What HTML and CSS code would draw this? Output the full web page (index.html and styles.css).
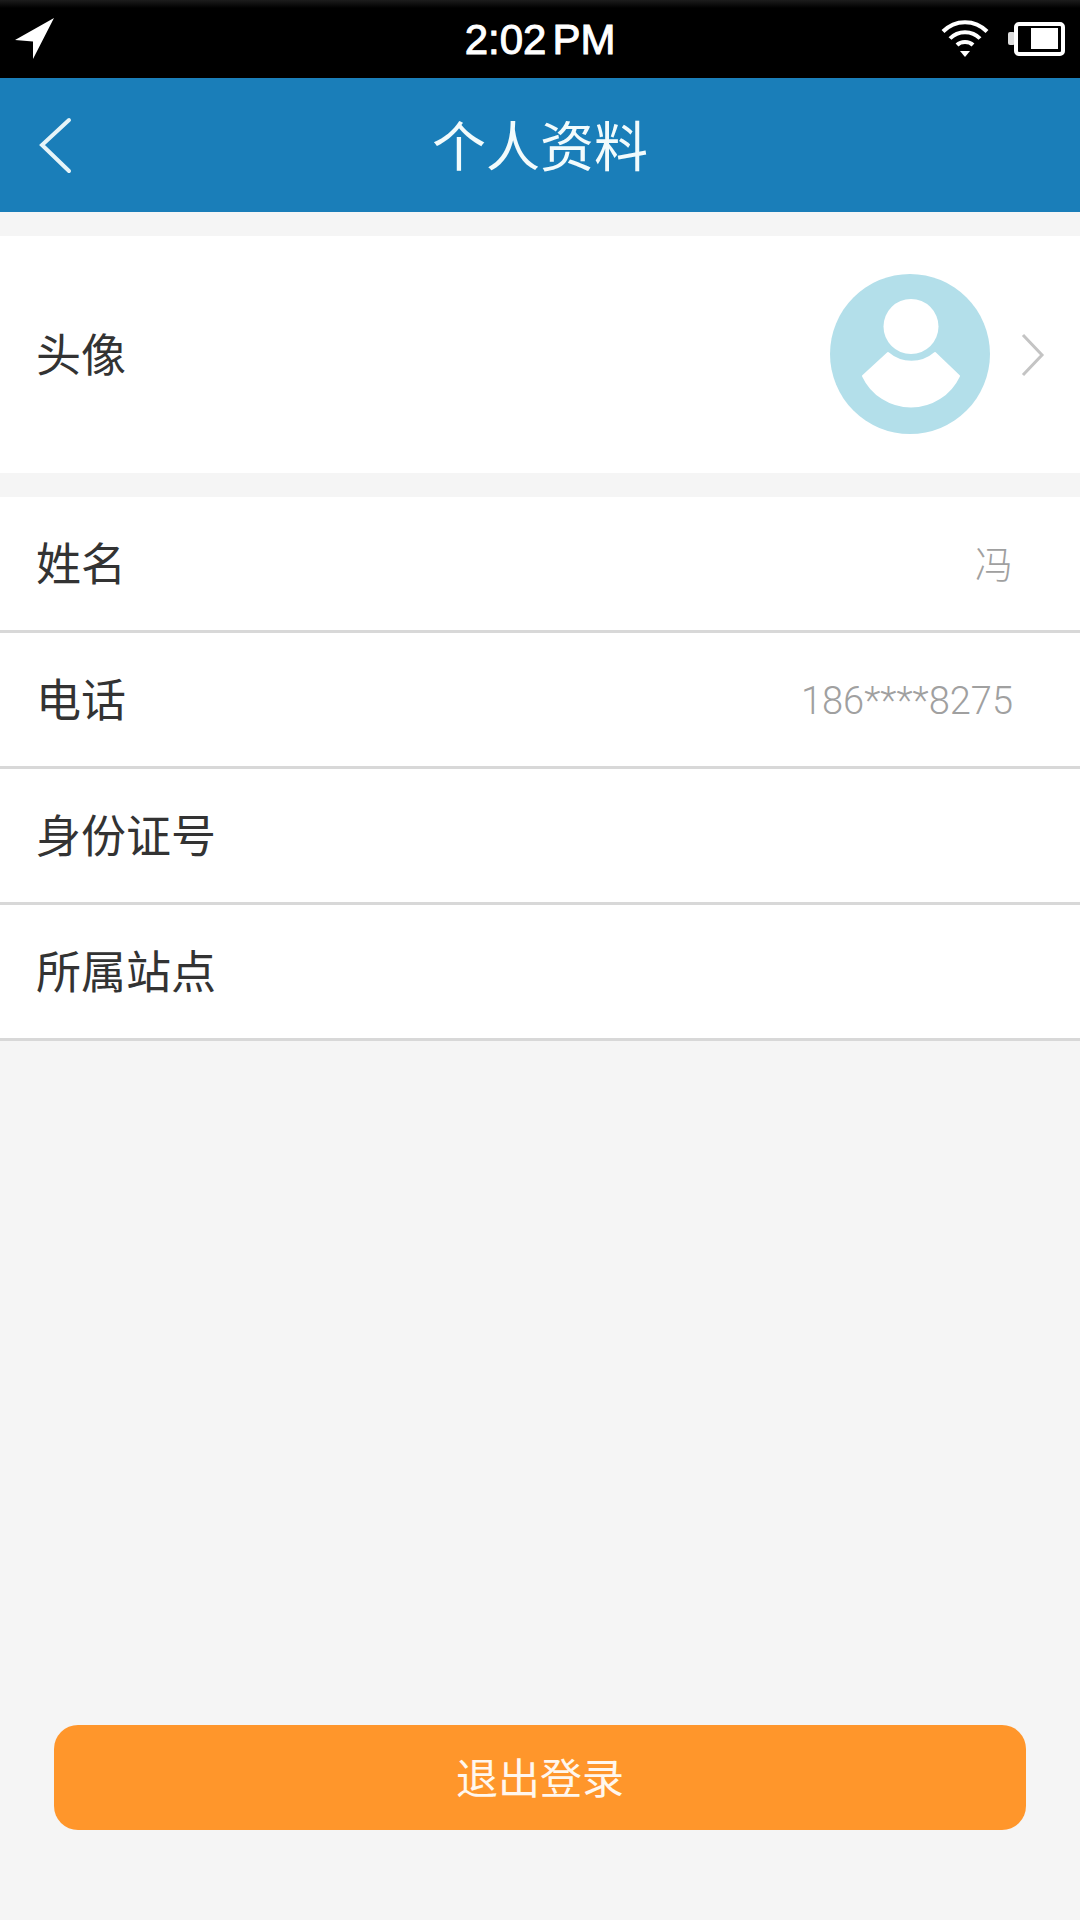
FILE: index.html
```html
<!DOCTYPE html>
<html lang="zh">
<head>
	<meta charset="utf-8">
	<title>个人资料</title>
	<link rel="stylesheet" href="styles.css">
</head>
<body>
	<div class="statusbar">
		<svg class="ic-loc" width="40" height="42" viewBox="0 0 40 42"><path d="M39 0 L0 22 L18 23.500 L18 41 Z" fill="#fff"/></svg>
		<div class="time"><span>2:02</span><span class="pm">PM</span></div>
		<div class="status-right">
			<svg width="48" height="38" viewBox="0 0 48 38" fill="none" stroke="#fff" stroke-width="4">
				<path d="M2 11.500 C14 -1 34 -1 46 11.500"/>
				<path d="M9 18.500 C17 10 31 10 39 18.500"/>
				<path d="M16 25 C20 21 28 21 32 25"/>
				<path d="M19 31 L29 31 L24 37 Z" fill="#fff" stroke="none"/>
			</svg>
			<svg width="58" height="36" viewBox="0 0 58 36"><rect x="1" y="11" width="7" height="13" rx="2" fill="#ddd"/><rect x="9" y="3" width="47" height="30" rx="3" fill="none" stroke="#fff" stroke-width="4"/><rect x="24" y="7" width="27" height="21" fill="#fff"/></svg>
		</div>
	</div>
	<div class="navbar">
		<svg class="back" width="40" height="60" viewBox="0 0 40 60" fill="none" stroke="#e6f4f8" stroke-width="4" stroke-linecap="round"><path d="M33 6 L6 31 L33 57"/></svg>
		<h1>个人资料</h1>
	</div>
	<div class="avatar-row">
		<span class="label">头像</span>
		<svg class="avatar" width="160" height="160" viewBox="0 0 160 160">
			<circle cx="80" cy="80" r="80" fill="#b3dfea"/>
			<circle cx="81" cy="52.500" r="27.500" fill="#fff"/>
			<path d="M58 79 A36 36 0 0 0 105 79 L129 102 A53 53 0 0 1 33 102 Z" fill="#fff" stroke="#fff" stroke-width="2" stroke-linejoin="round"/>
		</svg>
		<svg class="chevron" width="24" height="44" viewBox="0 0 24 44" fill="none" stroke="#c4c4c4" stroke-width="3"><path d="M2 2 L21 22 L2 42"/></svg>
	</div>
	<div class="list">
		<div class="row"><span class="label">姓名</span><span class="val">冯</span></div>
		<div class="row"><span class="label">电话</span><span class="val">186****8275</span></div>
		<div class="row"><span class="label">身份证号</span></div>
		<div class="row"><span class="label">所属站点</span></div>
	</div>
	<div class="logout"><span>退出登录</span></div>
</body>
</html>
```

FILE: styles.css
```css
html, body { margin: 0; padding: 0; }
body {
	width: 1080px;
	height: 1920px;
	background: #f5f5f5;
	font-family: "Noto Sans CJK SC", "Liberation Sans", sans-serif;
	display: flex;
	flex-direction: column;
	overflow: hidden;
}

.statusbar {
	height: 78px;
	background: linear-gradient(#1c1c1c 0, #000 8px);
	display: flex;
	align-items: center;
	justify-content: space-between;
	position: relative;
	padding: 0 15px;
	box-sizing: border-box;
}
.ic-loc { display: block; }
.time {
	position: absolute;
	left: 0;
	right: 0;
	top: 17px;
	text-align: center;
	color: #fff;
	font: 42px/46px "Liberation Sans", sans-serif;
	-webkit-text-stroke: 1px #fff;
}
.pm { margin-left: 6px; }
.status-right { display: flex; align-items: center; gap: 18px; }

.navbar {
	height: 134px;
	background: #1a7eb9;
	display: flex;
	align-items: center;
	justify-content: center;
	position: relative;
	padding-bottom: 3px;
	box-sizing: border-box;
}
.navbar h1 {
	margin: 0;
	color: #f2fbfc;
	font-size: 54px;
	font-weight: 400;
	line-height: 64px;
}
.back { position: absolute; left: 36px; top: 36px; }

.avatar-row {
	margin-top: 24px;
	height: 237px;
	background: #fff;
	display: flex;
	align-items: center;
	padding: 0 35px 0 36px;
}
.avatar { margin-left: auto; margin-bottom: 2px; }
.chevron { margin-left: 31px; }

.label { font-size: 45px; line-height: 52px; color: #333; font-weight: 400; padding-bottom: 4px; }

.list { margin-top: 24px; }
.row {
	height: 136px;
	box-sizing: border-box;
	background: #fff;
	border-bottom: 3px solid #d8d8d8;
	display: flex;
	align-items: center;
	justify-content: space-between;
	padding: 0 67px 0 36px;
}
.val {
	color: #a0a0a0;
	font: 300 38px/48px Roboto, "Noto Sans CJK SC", sans-serif;
	padding-top: 3px;
}

.logout {
	margin: auto 54px 90px;
	height: 105px;
	border-radius: 24px;
	background: #ff962b;
	color: #fff7ee;
	font-size: 42px;
	font-weight: 400;
	display: flex;
	align-items: center;
	justify-content: center;
	padding-bottom: 4px;
	box-sizing: border-box;
}
```
